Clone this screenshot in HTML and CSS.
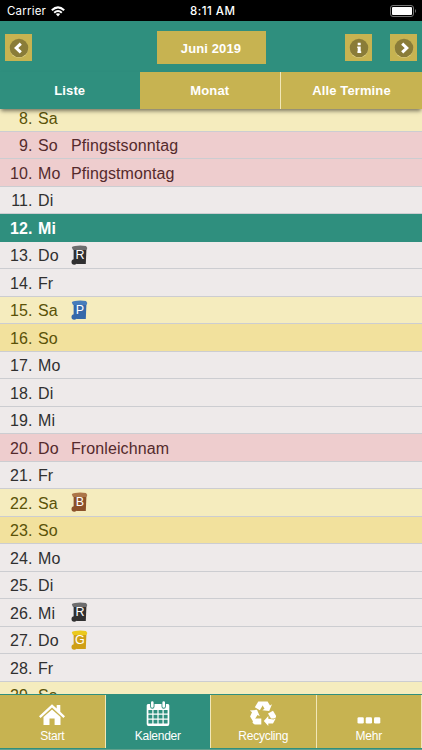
FILE: index.html
```
<!DOCTYPE html>
<html lang="de">
<head>
<meta charset="utf-8">
<title>Kalender</title>
<link rel="stylesheet" href="styles.css">
</head>
<body>
<svg class="defs" width="0" height="0" aria-hidden="true">
  <symbol id="bin" viewBox="0 0 17 20">
    <path d="M2.6 4.5H15.4L14.8 19H5.5L2.6 15z" fill="currentColor"/>
    <path d="M.8 2.6Q1 1.2 4 1Q9-.2 15 1L16.3 3L15.5 5H2Z" class="lid"/>
    <circle cx="3.2" cy="17" r="2.7" fill="currentColor"/>
  </symbol>
</svg>
<div class="app">
  <div class="status">
    <span class="carrier">Carrier</span>
    <svg class="wifi" width="14" height="11" viewBox="0 0 14 11" fill="none" stroke="#fff" stroke-width="2"><path d="M.8 4.2Q7-1.5 13.2 4.2M3.2 6.7Q7 3.2 10.8 6.7"/><path d="M4.8 8.1Q7 6.3 9.2 8.1L7 10.5z" fill="#fff" stroke="none"/></svg>
    <span class="time">8:11 AM</span>
    <svg class="battery" width="27" height="12" viewBox="0 0 27 12"><rect x=".5" y=".5" width="23" height="11" rx="2.5" fill="none" stroke="#777"/><rect x="2" y="2" width="20" height="8" rx="1" fill="#fff"/><path d="M25 4Q27 6 25 8z" fill="#777"/></svg>
  </div>
  <header class="header">
    <button class="square"><svg width="20" height="20" viewBox="0 0 20 20"><circle cx="10" cy="10.6" r="9.3" fill="#e2d48d"/><circle cx="10" cy="10" r="9.3" fill="#8a7c38"/><path d="M11.8 5.6L7.2 10L11.8 14.4" fill="none" stroke="#fff" stroke-width="3"/></svg></button>
    <button class="month">Juni 2019</button>
    <div class="actions">
      <button class="square"><svg width="20" height="20" viewBox="0 0 20 20"><circle cx="10" cy="10.6" r="9.3" fill="#e2d48d"/><circle cx="10" cy="10" r="9.3" fill="#8a7c38"/><path d="M8.7 4.7h3v2.5h-3zM8.2 8.4h3.5v4.9h.5v1.7H8.4v-1.7h.3v-3.2h-.5z" fill="#fff"/></svg></button>
      <button class="square"><svg width="20" height="20" viewBox="0 0 20 20"><circle cx="10" cy="10.6" r="9.3" fill="#e2d48d"/><circle cx="10" cy="10" r="9.3" fill="#8a7c38"/><path d="M8.2 5.6L12.8 10L8.2 14.4" fill="none" stroke="#fff" stroke-width="3"/></svg></button>
    </div>
  </header>
  <nav class="views"><a class="view on">Liste</a><a class="view">Monat</a><a class="view">Alle Termine</a></nav>
  <main class="list">
    <div class="day sat"><span class="num">8.</span><span class="wd">Sa</span></div>
    <div class="day holiday"><span class="num">9.</span><span class="wd">So</span><span>Pfingstsonntag</span></div>
    <div class="day holiday"><span class="num">10.</span><span class="wd">Mo</span><span>Pfingstmontag</span></div>
    <div class="day"><span class="num">11.</span><span class="wd">Di</span></div>
    <div class="day today"><span class="num">12.</span><span class="wd">Mi</span></div>
    <div class="day"><span class="num">13.</span><span class="wd">Do</span><span class="bin black"><svg width="17" height="20"><use href="#bin"/></svg><b>R</b></span></div>
    <div class="day"><span class="num">14.</span><span class="wd">Fr</span></div>
    <div class="day sat"><span class="num">15.</span><span class="wd">Sa</span><span class="bin blue"><svg width="17" height="20"><use href="#bin"/></svg><b>P</b></span></div>
    <div class="day sun"><span class="num">16.</span><span class="wd">So</span></div>
    <div class="day"><span class="num">17.</span><span class="wd">Mo</span></div>
    <div class="day"><span class="num">18.</span><span class="wd">Di</span></div>
    <div class="day"><span class="num">19.</span><span class="wd">Mi</span></div>
    <div class="day holiday"><span class="num">20.</span><span class="wd">Do</span><span>Fronleichnam</span></div>
    <div class="day"><span class="num">21.</span><span class="wd">Fr</span></div>
    <div class="day sat"><span class="num">22.</span><span class="wd">Sa</span><span class="bin brown"><svg width="17" height="20"><use href="#bin"/></svg><b>B</b></span></div>
    <div class="day sun"><span class="num">23.</span><span class="wd">So</span></div>
    <div class="day"><span class="num">24.</span><span class="wd">Mo</span></div>
    <div class="day"><span class="num">25.</span><span class="wd">Di</span></div>
    <div class="day"><span class="num">26.</span><span class="wd">Mi</span><span class="bin black"><svg width="17" height="20"><use href="#bin"/></svg><b>R</b></span></div>
    <div class="day"><span class="num">27.</span><span class="wd">Do</span><span class="bin yellow"><svg width="17" height="20"><use href="#bin"/></svg><b>G</b></span></div>
    <div class="day"><span class="num">28.</span><span class="wd">Fr</span></div>
    <div class="day sat"><span class="num">29.</span><span class="wd">Sa</span></div>
  </main>
  <nav class="tabs">
    <a class="tab"><svg width="28" height="28" viewBox="0 0 28 28" fill="#fff"><path d="M14 4.2L18.7 8.5V5h3.6v6.8L27 16.2L25.4 18L14 7.6L2.6 18L1 16.2z"/><path d="M14 9.4L22.5 17V25H16.6V18.5H11.5V25H5.5V17z"/></svg>Start</a>
    <a class="tab on"><svg width="28" height="28" viewBox="0 0 28 28" fill="#fff"><path fill-rule="evenodd" d="M4 4H24Q25.3 4 25.3 5.5V24Q25.3 26 23.5 26H4.5Q2.7 26 2.7 24V5.5Q2.7 4 4 4zM4.4 10v3.4h3.9V10zM9.5 10v3.4h3.9V10zM14.6 10v3.4h3.9V10zM19.7 10v3.4h3.9V10zM4.4 14.8v3.6h3.9v-3.6zM9.5 14.8v3.6h3.9v-3.6zM14.6 14.8v3.6h3.9v-3.6zM19.7 14.8v3.6h3.9v-3.6zM4.4 19.8v3.8h3.9v-3.8zM9.5 19.8v3.8h3.9v-3.8zM14.6 19.8v3.8h3.9v-3.8zM19.7 19.8v3.8h3.9v-3.8z"/><path d="M8.3 3V6.5M19.7 3V6.5" stroke="#2f8f7e" stroke-width="4.4" stroke-linecap="round"/><path d="M8.3 2.6V6.5M19.7 2.6V6.5" stroke="#fff" stroke-width="2.6" stroke-linecap="round"/></svg>Kalender</a>
    <a class="tab"><svg width="28" height="28" viewBox="0 0 28 28" fill="#fff"><path d="M5.8 7.2L9.3 1.5H14L15 3.2L10.8 10.3z"/><path d="M14.2 1.5H18.6L21 5.4L23 4.3L20.2 11L13.3 10.2L15.5 8.8L12.8 4z"/><path d="M19 13.6L24 10.7L27 15.8Q27.3 18.4 24.5 18.6H22z"/><path d="M26.7 18.5L24 23.6H19.3V26L14.8 21L19.3 16V18.8L24.5 19.4Z"/><path d="M4.7 18.5H12.3V24.4H5.8Q4.3 24.2 3.6 22.6Z"/><path d="M.9 10.5L8 9.8L10.8 16.2L8.5 15L4.2 21.8L1.1 16.6L3 12.2z"/></svg>Recycling</a>
    <a class="tab"><svg width="28" height="28" viewBox="0 0 28 28" fill="#fff"><rect x="2.5" y="17.3" width="6.3" height="6.3" rx="1.3"/><rect x="10.7" y="17.3" width="6.3" height="6.3" rx="1.3"/><rect x="19" y="17.3" width="6.3" height="6.3" rx="1.3"/></svg>Mehr</a>
  </nav>
</div>
</body>
</html>
```
FILE: styles.css
```
* { box-sizing: border-box; }
body { margin: 0; font-family: "Liberation Sans", Arial, sans-serif; }
button { border: 0; padding: 0; font: inherit; color: inherit; }
svg { display: block; flex: none; }
.defs { position: absolute; }
.app { width: 422px; height: 750px; display: flex; flex-direction: column; background: #2f8f7e; overflow: hidden; }
.status { height: 21px; flex: none; display: grid; grid-template-columns: auto 14px 1fr 27px; align-items: center; padding: 1px 5px 0 7px; background: #000; color: #fff; font: 11.5px/20px Inter, sans-serif; }
.carrier { width: 39px; margin-right: 5px; letter-spacing: .2px; }
.time { padding-left: 125px; font-weight: 500; letter-spacing: .5px; white-space: nowrap; }
.header { height: 51px; flex: none; display: grid; grid-template-columns: 1fr 109px 1fr; align-items: start; padding: 10px 5px 0; color: #fff; }
.square { width: 27px; height: 27px; margin-top: 3px; display: grid; place-items: center; background: #c7b351; }
.month { height: 33px; padding-top: 1px; background: #c7b351; font-size: 13px; font-weight: bold; letter-spacing: .12px; }
.actions { display: flex; justify-content: flex-end; gap: 18px; }
.views { height: 37px; flex: none; display: grid; grid-template-columns: 139.5px 140.5px 142px; padding-bottom: 1px; position: relative; background: #2f8f7e; box-shadow: 0 3px 4px -1px rgba(0,0,0,.5); }
.view { color: #fff; background: #c7b351; text-align: center; font-size: 13px; font-weight: bold; line-height: 37px; letter-spacing: .12px; }
.view:last-child { border-left: 1px solid #f1e7b7; }
.view.on { background: #2f8f7e; }
.list { height: 585px; flex: none; overflow: hidden; background: #eeeaea; }
.day { height: 27.5px; display: flex; align-items: center; padding-top: 2px; border-bottom: 1px solid #cccdd1; color: #303030; background: #eeeaea; font-size: 16px; line-height: 25px; letter-spacing: .1px; }
.day:first-child { margin-top: -5px; }
.num { width: 32.5px; text-align: right; margin-right: 5.5px; }
.wd { width: 33px; }
.sat { background: #f5ecbe; color: #5a5208; }
.sun { background: #f2e19d; color: #5a5208; }
.holiday { background: #eecdce; color: #542a2c; }
.today { background: #2f8f7e; color: #fff; font-weight: bold; border-color: #2f8f7e; }
.bin { display: grid; width: 17px; height: 20px; margin-top: -2px; }
.bin svg, .bin b { grid-area: 1 / 1; }
.bin b { color: #fff; font-size: 12.5px; line-height: 20px; text-align: center; font-weight: normal; padding-left: 1px; }
.lid { fill: var(--lid); }
.black { color: #303031; --lid: #6d6d6e; }
.blue { color: #3568aa; --lid: #477cbb; }
.brown { color: #8c512a; --lid: #ad7649; }
.yellow { color: #cf9f16; --lid: #ebc91d; }
.tabs { height: 56px; flex: none; display: grid; grid-template-columns: repeat(4, 1fr); padding: 1px 0; border-bottom: 1px solid #62a18d; }
.tab { display: flex; flex-direction: column; align-items: center; padding-top: 5px; color: #fff; background: #c7b351; border-right: 1px solid #f1e7b7; font-size: 12px; line-height: 17px; letter-spacing: -.25px; }
.tab.on { background: #2f8f7e; }
```
